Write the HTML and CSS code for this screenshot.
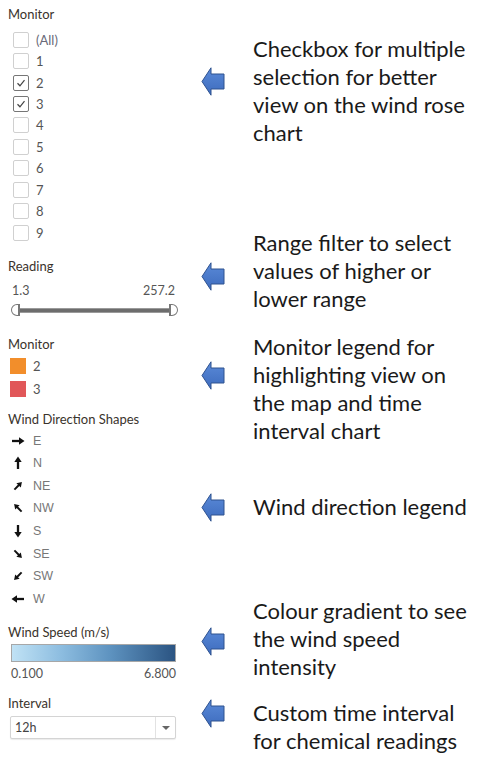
FILE: index.html
```html
<!DOCTYPE html>
<html lang="en">
<head>
<meta charset="utf-8">
<title>Dashboard filters</title>
<link rel="stylesheet" href="styles.css">
</head>
<body>
<svg class="defs" width="0" height="0" aria-hidden="true">
  <defs>
    <linearGradient id="callout-fill" x1="0" y1="0" x2="0" y2="1">
      <stop offset="0" stop-color="#5a8ad8"/>
      <stop offset="1" stop-color="#3d6bbd"/>
    </linearGradient>
    <symbol id="callout" viewBox="0 0 24 29">
      <polygon points="1,14.5 10,0.8 10,7 23,7 23,22 10,22 10,28.2" fill="url(#callout-fill)" stroke="#2f528f" stroke-width="1" stroke-linejoin="miter"/>
    </symbol>
    <symbol id="dir" viewBox="0 0 14 14">
      <line x1="1" y1="7" x2="9" y2="7" stroke="#111" stroke-width="2.3"/>
      <polygon points="13.5,7 8,3.3 8,10.7" fill="#111"/>
    </symbol>
    <symbol id="tick" viewBox="0 0 16 16">
      <polyline points="4,8.3 6.8,11.2 12,4.8" fill="none" stroke="#444" stroke-width="1.4"/>
    </symbol>
  </defs>
</svg>
<main class="page">
  <aside class="panel">
    <section class="filter">
      <h2 class="filter__title">Monitor</h2>
      <ul class="checklist">
        <li class="check"><span class="check__box"></span><span class="check__label check__label--all">(All)</span></li>
        <li class="check"><span class="check__box"></span><span class="check__label">1</span></li>
        <li class="check"><span class="check__box check__box--on"><svg class="check__tick"><use href="#tick"/></svg></span><span class="check__label">2</span></li>
        <li class="check"><span class="check__box check__box--on"><svg class="check__tick"><use href="#tick"/></svg></span><span class="check__label">3</span></li>
        <li class="check"><span class="check__box"></span><span class="check__label">4</span></li>
        <li class="check"><span class="check__box"></span><span class="check__label">5</span></li>
        <li class="check"><span class="check__box"></span><span class="check__label">6</span></li>
        <li class="check"><span class="check__box"></span><span class="check__label">7</span></li>
        <li class="check"><span class="check__box"></span><span class="check__label">8</span></li>
        <li class="check"><span class="check__box"></span><span class="check__label">9</span></li>
      </ul>
    </section>

    <section class="filter filter--reading">
      <h2 class="filter__title">Reading</h2>
      <div class="range__values"><span>1.3</span><span>257.2</span></div>
      <div class="range__track">
        <span class="range__handle range__handle--min"></span>
        <span class="range__bar"></span>
        <span class="range__handle range__handle--max"></span>
      </div>
    </section>

    <section class="filter filter--legend">
      <h2 class="filter__title">Monitor</h2>
      <ul class="legend">
        <li class="legend__item"><span class="legend__swatch legend__swatch--orange"></span><span class="legend__label">2</span></li>
        <li class="legend__item"><span class="legend__swatch legend__swatch--red"></span><span class="legend__label">3</span></li>
      </ul>
    </section>

    <section class="filter filter--shapes">
      <h2 class="filter__title">Wind Direction Shapes</h2>
      <ul class="shapes">
        <li class="shape"><svg class="shape__icon shape__icon--e"><use href="#dir"/></svg><span class="shape__label">E</span></li>
        <li class="shape"><svg class="shape__icon shape__icon--n"><use href="#dir"/></svg><span class="shape__label">N</span></li>
        <li class="shape"><svg class="shape__icon shape__icon--ne"><use href="#dir"/></svg><span class="shape__label">NE</span></li>
        <li class="shape"><svg class="shape__icon shape__icon--nw"><use href="#dir"/></svg><span class="shape__label">NW</span></li>
        <li class="shape"><svg class="shape__icon shape__icon--s"><use href="#dir"/></svg><span class="shape__label">S</span></li>
        <li class="shape"><svg class="shape__icon shape__icon--se"><use href="#dir"/></svg><span class="shape__label">SE</span></li>
        <li class="shape"><svg class="shape__icon shape__icon--sw"><use href="#dir"/></svg><span class="shape__label">SW</span></li>
        <li class="shape"><svg class="shape__icon shape__icon--w"><use href="#dir"/></svg><span class="shape__label">W</span></li>
      </ul>
    </section>

    <section class="filter filter--speed">
      <h2 class="filter__title">Wind Speed (m/s)</h2>
      <div class="gradient"></div>
      <div class="gradient__values"><span>0.100</span><span>6.800</span></div>
    </section>

    <section class="filter filter--interval">
      <h2 class="filter__title">Interval</h2>
      <div class="select">
        <span class="select__value">12h</span>
        <span class="select__button"><span class="select__caret"></span></span>
      </div>
    </section>
  </aside>

  <div class="notes">
    <div class="note note--checkbox">
      <svg class="note__arrow"><use href="#callout"/></svg>
      <p class="note__text">Checkbox for multiple<br>selection for better<br>view on the wind rose<br>chart</p>
    </div>
    <div class="note note--range">
      <svg class="note__arrow"><use href="#callout"/></svg>
      <p class="note__text">Range filter to select<br>values of higher or<br>lower range</p>
    </div>
    <div class="note note--legend">
      <svg class="note__arrow"><use href="#callout"/></svg>
      <p class="note__text">Monitor legend for<br>highlighting view on<br>the map and time<br>interval chart</p>
    </div>
    <div class="note note--direction">
      <svg class="note__arrow"><use href="#callout"/></svg>
      <p class="note__text">Wind direction legend</p>
    </div>
    <div class="note note--gradient">
      <svg class="note__arrow"><use href="#callout"/></svg>
      <p class="note__text">Colour gradient to see<br>the wind speed<br>intensity</p>
    </div>
    <div class="note note--interval">
      <svg class="note__arrow"><use href="#callout"/></svg>
      <p class="note__text">Custom time interval<br>for chemical readings</p>
    </div>
  </div>
</main>
</body>
</html>
```

FILE: styles.css
```css
* { box-sizing: border-box; }

html, body {
  margin: 0;
  padding: 0;
  background: #fff;
}

.defs { position: absolute; width: 0; height: 0; overflow: hidden; }

.page {
  display: flex;
  width: 481px;
  height: 764px;
  overflow: hidden;
}

/* ---------- left panel ---------- */
.panel {
  width: 195px;
  flex: none;
  padding: 6px 0 0 8px;
  font-family: Lato, "Open Sans", sans-serif;
  font-size: 13px;
  color: #555;
}

.filter__title {
  margin: 0;
  font-size: 13px;
  line-height: 16px;
  font-weight: 400;
  color: #3a332c;
}

.checklist, .legend, .shapes {
  list-style: none;
  margin: 0;
  padding: 0;
}

.checklist { margin-top: 7px; padding-left: 5px; }

.check {
  display: flex;
  align-items: center;
  height: 21.45px;
  gap: 7px;
}

.check__box {
  width: 16px;
  height: 16px;
  border: 1px solid #d0d0d0;
  border-radius: 2px;
  background: #fff;
  display: flex;
  align-items: center;
  justify-content: center;
}

.check__box--on { border-color: #767676; }

.check__tick { width: 14px; height: 14px; }

.check__label {
  font-size: 13px;
  color: #555;
  line-height: 16px;
}

.check__label--all { color: #6a6a78; }

/* range */
.filter--reading { margin-top: 15px; }

.range__values {
  display: flex;
  justify-content: space-between;
  width: 163px;
  margin: 9px 0 0 4px;
  font-size: 12.5px;
  line-height: 16px;
  color: #555;
}

.range__track {
  display: flex;
  align-items: center;
  width: 167px;
  margin: 5px 0 0 3px;
  height: 12px;
}

.range__handle {
  width: 9px;
  height: 12px;
  border: 1px solid #777;
  background: #fff;
  flex: none;
}

.range__handle--min { border-radius: 6px 0 0 6px; border-right: 2px solid #777; }
.range__handle--max { border-radius: 0 6px 6px 0; border-left: 2px solid #777; }

.range__bar {
  flex: 1;
  height: 5px;
  background: #6d6d6d;
  border-top: 1px solid #9a9a9a;
  border-bottom: 1px solid #9a9a9a;
}

/* monitor legend */
.filter--legend { margin-top: 20px; }

.legend { margin-top: 2px; padding-left: 2px; }

.legend__item {
  display: flex;
  align-items: center;
  gap: 7px;
  height: 23px;
}

.legend__swatch {
  width: 16px;
  height: 16px;
  flex: none;
}

.legend__swatch--orange { background: #f28e2b; }
.legend__swatch--red { background: #e15759; }

.legend__label { font-size: 13px; color: #555; }

/* wind direction shapes */
.filter--shapes { margin-top: 11px; }

.shapes { margin-top: 2px; padding-left: 3px; }

.shape {
  display: flex;
  align-items: center;
  gap: 8px;
  height: 22.6px;
}

.shape__icon { width: 14px; height: 14px; flex: none; }
.shape__icon--n  { transform: rotate(-90deg); }
.shape__icon--ne { transform: rotate(-45deg) scale(0.85); }
.shape__icon--nw { transform: rotate(-135deg) scale(0.85); }
.shape__icon--s  { transform: rotate(90deg); }
.shape__icon--se { transform: rotate(45deg) scale(0.85); }
.shape__icon--sw { transform: rotate(135deg) scale(0.85); }
.shape__icon--w  { transform: rotate(180deg); }

.shape__label {
  font-family: "Liberation Sans", Arial, sans-serif;
  font-size: 12.5px;
  color: #777;
}

/* wind speed gradient */
.filter--speed { margin-top: 14px; }

.gradient {
  width: 165px;
  height: 18px;
  margin: 4px 0 0 3px;
  border: 1px solid #a7a7a7;
  background: linear-gradient(to right, #c0e2f5, #8dbde0 30%, #5e93c0 60%, #2b5482);
}

.gradient__values {
  display: flex;
  justify-content: space-between;
  width: 165px;
  margin: 4px 0 0 3px;
  font-size: 12.5px;
  line-height: 16px;
  color: #555;
}

/* interval dropdown */
.filter--interval { margin-top: 13px; }

.select {
  display: flex;
  align-items: stretch;
  width: 166px;
  height: 23px;
  margin: 5px 0 0 2px;
  border: 1px solid #d4d4d4;
  border-radius: 2px;
  background: #fff;
  box-shadow: 0 1px 1px rgba(0,0,0,0.08);
}

.select__value {
  flex: 1;
  padding-left: 4px;
  font-size: 12.5px;
  line-height: 21px;
  color: #444;
}

.select__button {
  width: 20px;
  border-left: 1px solid #e2e2e2;
  display: flex;
  align-items: center;
  justify-content: center;
}

.select__caret {
  width: 0;
  height: 0;
  border-left: 4px solid transparent;
  border-right: 4px solid transparent;
  border-top: 4px solid #666;
}

/* ---------- annotations ---------- */
.notes {
  flex: 1;
  padding-left: 6px;
  font-family: Lato, "Open Sans", sans-serif;
  font-size: 22px;
  line-height: 28px;
  color: #1a1a1a;
}

.note {
  display: flex;
  align-items: flex-start;
}

.note__arrow {
  width: 24px;
  height: 29px;
  flex: none;
  margin-right: 28px;
}

.note__text { margin: 0; white-space: nowrap; }

.note--checkbox  { margin-top: 35px; }
.note--checkbox .note__arrow { margin-top: 32px; }

.note--range     { margin-top: 82px; }
.note--range .note__arrow { margin-top: 33px; }

.note--legend    { margin-top: 20px; }
.note--legend .note__arrow { margin-top: 28px; }

.note--direction { margin-top: 48px; }
.note--direction .note__arrow { margin-top: 0; }

.note--gradient  { margin-top: 75px; }
.note--gradient .note__arrow { margin-top: 30px; }

.note--interval  { margin-top: 18px; }
.note--interval .note__arrow { margin-top: 0; }
```
